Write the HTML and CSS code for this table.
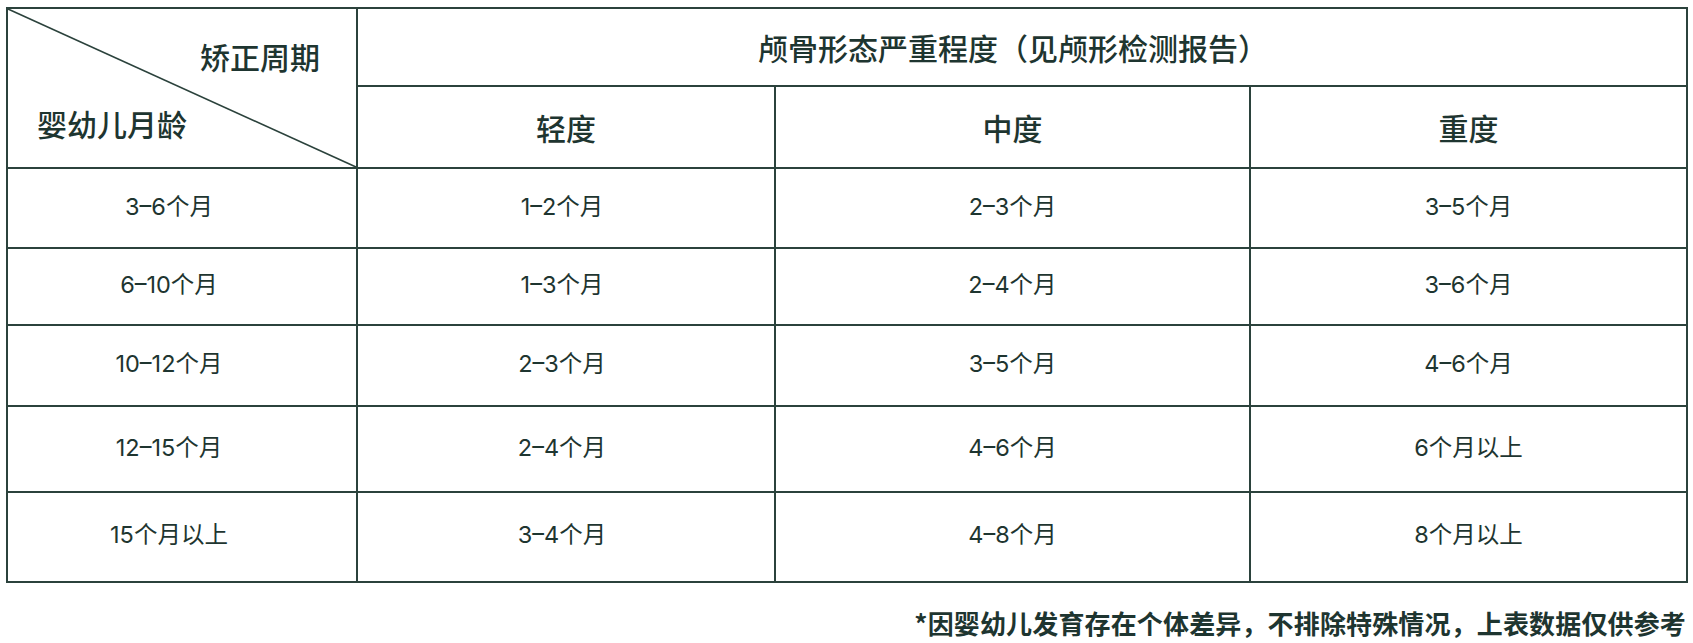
FILE: index.html
```html
<!DOCTYPE html>
<html lang="zh-CN">
<head>
<meta charset="utf-8">
<title>矫正周期</title>
<link rel="stylesheet" href="styles.css">
</head>
<body>
<div class="page">
  <table class="cycle">
    <colgroup>
      <col class="c1"><col class="c2"><col class="c3"><col class="c4">
    </colgroup>
    <thead>
      <tr class="h1">
        <th class="corner" rowspan="2">
          <svg class="diag" viewBox="0 0 100 100" preserveAspectRatio="none"><line x1="0" y1="0" x2="100" y2="100" vector-effect="non-scaling-stroke"/></svg>
          <div class="corner-in">
            <span class="corner-top">矫正周期</span>
            <span class="corner-bottom">婴幼儿月龄</span>
          </div>
        </th>
        <th colspan="3">颅骨形态严重程度（见颅形检测报告）</th>
      </tr>
      <tr class="h2">
        <th>轻度</th>
        <th>中度</th>
        <th>重度</th>
      </tr>
    </thead>
    <tbody>
      <tr class="r1"><td class="age">3–6个月</td><td class="mild">1–2个月</td><td>2–3个月</td><td>3–5个月</td></tr>
      <tr class="r2"><td class="age">6–10个月</td><td class="mild">1–3个月</td><td>2–4个月</td><td>3–6个月</td></tr>
      <tr class="r3"><td class="age">10–12个月</td><td class="mild">2–3个月</td><td>3–5个月</td><td>4–6个月</td></tr>
      <tr class="r4"><td class="age">12–15个月</td><td class="mild">2–4个月</td><td>4–6个月</td><td>6个月以上</td></tr>
      <tr class="r5"><td class="age">15个月以上</td><td class="mild">3–4个月</td><td>4–8个月</td><td>8个月以上</td></tr>
    </tbody>
  </table>
  <p class="note">*因婴幼儿发育存在个体差异，不排除特殊情况，上表数据仅供参考</p>
</div>
</body>
</html>
```

FILE: styles.css
```css
html, body {
  margin: 0;
  padding: 0;
  background: #ffffff;
}

body {
  font-family: "Noto Sans CJK SC", "Noto Sans", sans-serif;
  color: #1e3530;
}

.page {
  padding: 7px 7px 0 6px;
  width: 1680px;
}

.cycle {
  width: 1680px;
  border-collapse: collapse;
  table-layout: fixed;
  border: 2px solid #2b423c;
}

.c1 { width: 350px; }
.c2 { width: 418px; }
.c3 { width: 475px; }
.c4 { width: 437px; }

.cycle th,
.cycle td {
  border: 2px solid #2b423c;
  text-align: center;
  vertical-align: middle;
  padding: 0;
}

.cycle th {
  font-size: 30px;
  font-weight: 500;
}

.h1 { height: 77px; }
.h2 { height: 81px; }

.h1 th:not(.corner) {
  padding-right: 18px;
}

.corner {
  position: relative;
}

.diag {
  position: absolute;
  left: 0;
  top: 0;
  width: 100%;
  height: 100%;
  overflow: visible;
}

.diag line {
  stroke: #2b423c;
  stroke-width: 1.6;
}

.corner-in {
  display: flex;
  flex-direction: column;
  height: 158px;
  box-sizing: border-box;
  padding: 31px 36px 28px 29px;
  justify-content: space-between;
}

.corner-top {
  align-self: flex-end;
  line-height: 32px;
}

.corner-bottom {
  align-self: flex-start;
  line-height: 32px;
}

.cycle td {
  font-family: "Inter", "Noto Sans CJK SC", sans-serif;
  font-size: 23.5px;
  font-weight: 400;
  line-height: 28px;
}

.cycle td.age {
  padding-right: 26px;
}

.cycle td.mild {
  padding-right: 8px;
}

.r1 { height: 80px; }
.r2 { height: 77px; }
.r3 { height: 81px; }
.r4 { height: 86px; }
.r5 { height: 90px; }

.r1 td, .r2 td, .r3 td, .r4 td {
  padding-bottom: 3px;
}
.r5 td {
  padding-bottom: 5px;
}

.note {
  margin: 24px 0 0 0;
  text-align: right;
  font-size: 26px;
  font-weight: 700;
  line-height: 32px;
  letter-spacing: 0.15px;
}
```
